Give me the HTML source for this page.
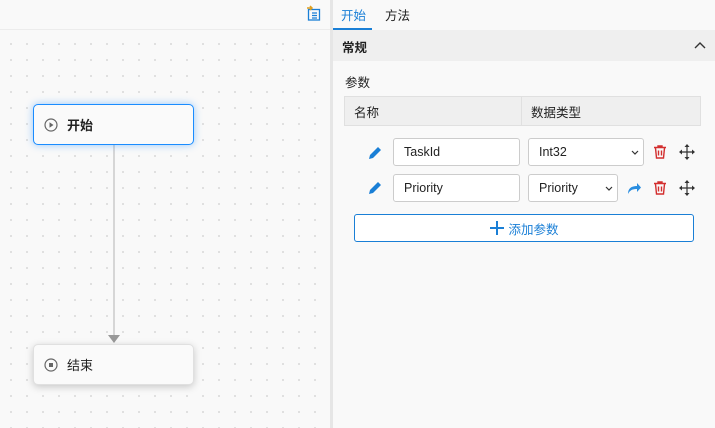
<!DOCTYPE html><html><head><meta charset="utf-8"><style>
*{box-sizing:border-box;margin:0;padding:0}
body{width:715px;height:428px;overflow:hidden;background:#f9f9f9;font-family:"Liberation Sans","Noto Sans CJK SC",sans-serif;font-size:12px;color:#222;position:relative}
.left{position:absolute;left:0;top:0;width:330px;height:428px;background-color:#f9f9f9;background-image:radial-gradient(circle,#d8d8d8 0.8px,transparent 1px);background-size:16px 16px;background-position:3px 36px}
.topbar{position:absolute;left:0;top:0;width:330px;height:30px;background:#f9f9f9;border-bottom:1px solid #ececec}
.div{position:absolute;left:330px;top:0;width:3px;height:428px;background:#e6e6e6}
.node{position:absolute;left:33px;width:161px;height:41px;background:#fafafa;border-radius:5px;display:flex;align-items:center;padding-left:10px;font-size:13px}
.n1{top:104px;border:1px solid #1a8cff;box-shadow:0 0 8px rgba(30,140,255,.45);font-weight:bold}
.n2{top:344px;border:1px solid #e0e0e0;box-shadow:0 2px 8px rgba(0,0,0,.2)}
.node span{margin-left:9px}
.right{position:absolute;left:333px;top:0;width:382px;height:428px;background:#f9f9f9}
.abs{position:absolute}
.inp{position:absolute;height:28px;border:1px solid #ccc;border-radius:3px;background:#fff;font-size:12.5px;padding-left:10px;display:flex;align-items:center}
.chev{position:absolute;right:4px;top:11px}
</style></head><body>
<div class="left"></div>
<div class="topbar"><svg class="abs" style="left:306px;top:5px" width="16" height="16" viewBox="0 0 16 16"><rect x="2.5" y="4.5" width="11" height="10.5" fill="none" stroke="#1a7fd6" stroke-width="1.3"/><path d="M6 8h5M6 10.5h5M6 13h5" stroke="#1a7fd6" stroke-width="1.2"/><path d="M1 3h5M4 1l2 2-2 2" stroke="#e0a020" stroke-width="1.5" fill="none"/></svg></div>
<div class="abs" style="left:113px;top:145px;width:2px;height:190px;background:#d6d6d6"></div>
<svg class="abs" style="left:108px;top:335px" width="12" height="8"><path d="M0 0h12L6 8z" fill="#999"/></svg>
<div class="node n1"><svg width="14" height="14" viewBox="0 0 14 14"><circle cx="7" cy="7" r="6" fill="none" stroke="#666" stroke-width="1.2"/><path d="M5.5 4.3v5.4L9.5 7z" fill="#666"/></svg><span>开始</span></div>
<div class="node n2"><svg width="14" height="14" viewBox="0 0 14 14"><circle cx="7" cy="7" r="6" fill="none" stroke="#666" stroke-width="1.2"/><rect x="5" y="5" width="4" height="4" fill="#666"/></svg><span>结束</span></div>
<div class="div"></div>
<div class="right">
<div class="abs" style="left:8px;top:5px;color:#1a7fd6;font-size:12.5px">开始</div>
<div class="abs" style="left:52px;top:5px;font-size:12.5px">方法</div>
<div class="abs" style="left:0;top:28px;width:39px;height:2px;background:#1a7fd6"></div>
<div class="abs" style="left:0;top:30px;width:382px;height:31px;background:#efefef"></div>
<div class="abs" style="left:9px;top:37px;font-weight:bold;font-size:12.5px">常规</div>
<svg class="abs" style="left:361px;top:41px" width="12" height="8"><path d="M1 7l5-5 5 5" stroke="#333" stroke-width="1.4" fill="none"/></svg>
<div class="abs" style="left:12px;top:72px;font-size:12.5px">参数</div>
<div class="abs" style="left:11px;top:96px;width:357px;height:30px;background:#efefef;border:1px solid #e0e0e0"></div>
<div class="abs" style="left:188px;top:96px;width:1px;height:30px;background:#e0e0e0"></div>
<div class="abs" style="left:21px;top:102px;font-size:12.5px">名称</div>
<div class="abs" style="left:198px;top:102px;font-size:12.5px">数据类型</div>
<svg class="abs" style="left:34px;top:145px" width="16" height="16" viewBox="0 0 16 16"><path d="M2 14l1-4 8-8 3 3-8 8z" fill="#1a7fd6"/></svg>
<svg class="abs" style="left:34px;top:180px" width="16" height="16" viewBox="0 0 16 16"><path d="M2 14l1-4 8-8 3 3-8 8z" fill="#1a7fd6"/></svg>
<div class="inp" style="left:60px;top:138px;width:127px">TaskId</div>
<div class="inp" style="left:60px;top:174px;width:127px">Priority</div>
<div class="inp" style="left:195px;top:138px;width:116px">Int32<svg class="chev" width="8" height="6"><path d="M1 1l3 3 3-3" stroke="#333" stroke-width="1.2" fill="none"/></svg></div>
<div class="inp" style="left:195px;top:174px;width:90px">Priority<svg class="chev" width="8" height="6"><path d="M1 1l3 3 3-3" stroke="#333" stroke-width="1.2" fill="none"/></svg></div>
<svg class="abs" style="left:293px;top:180px" width="16" height="16" viewBox="0 0 16 16"><path d="M2 14c0-6 4-8 9-8V3l4 4.5-4 4.5V9c-4 0-7 1-9 5z" fill="#2a8ee0"/></svg>
<svg class="abs" style="left:319px;top:144px" width="16" height="16" viewBox="0 0 16 16"><path d="M2 3.5h12M6 3.5V2h4v1.5M3.5 4l1 10h7l1-10M6.5 6.5v5M9.5 6.5v5" stroke="#d32f2f" stroke-width="1.4" fill="none"/></svg>
<svg class="abs" style="left:319px;top:180px" width="16" height="16" viewBox="0 0 16 16"><path d="M2 3.5h12M6 3.5V2h4v1.5M3.5 4l1 10h7l1-10M6.5 6.5v5M9.5 6.5v5" stroke="#d32f2f" stroke-width="1.4" fill="none"/></svg>
<svg class="abs" style="left:346px;top:144px" width="16" height="16" viewBox="0 0 16 16"><path d="M8 1v14M1 8h14" stroke="#333" stroke-width="1.2"/><path d="M8 0l2.5 3h-5zM8 16l2.5-3h-5zM0 8l3-2.5v5zM16 8l-3-2.5v5z" fill="#333"/></svg>
<svg class="abs" style="left:346px;top:180px" width="16" height="16" viewBox="0 0 16 16"><path d="M8 1v14M1 8h14" stroke="#333" stroke-width="1.2"/><path d="M8 0l2.5 3h-5zM8 16l2.5-3h-5zM0 8l3-2.5v5zM16 8l-3-2.5v5z" fill="#333"/></svg>
<div class="abs" style="left:21px;top:214px;width:340px;height:28px;border:1px solid #1a7fd6;border-radius:3px;background:#fff;display:flex;align-items:center;justify-content:center;color:#1a7fd6;font-size:12.5px"><svg width="16" height="16" style="margin-right:3px"><path d="M8 1v14M1 8h14" stroke="#1a7fd6" stroke-width="2"/></svg>添加参数</div>
</div>
</body></html>
